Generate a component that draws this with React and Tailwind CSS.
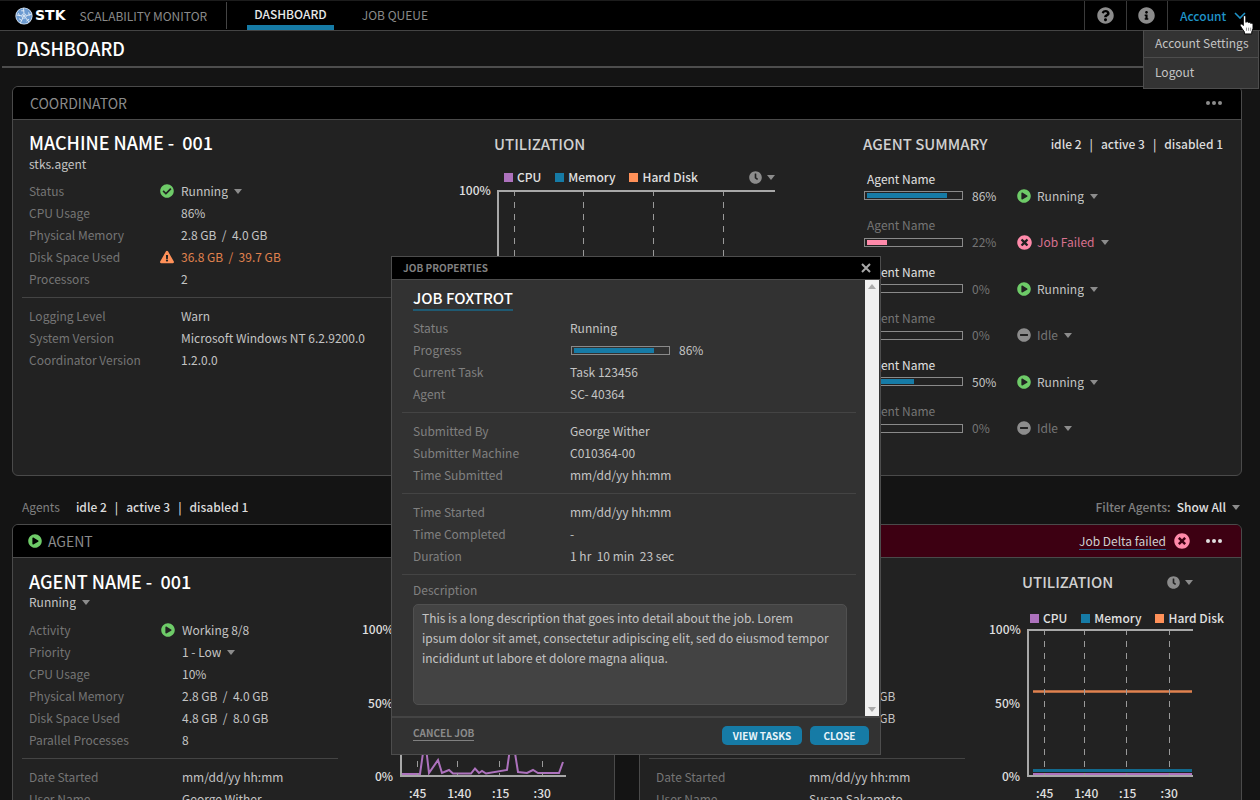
import { FaCheckCircle, FaPlayCircle, FaTimesCircle, FaMinusCircle, FaQuestionCircle, FaInfoCircle, FaClock, FaExclamationTriangle } from "react-icons/fa";

function Caret({ className = "" }) {
  return (
    <svg viewBox="0 0 8 5" className={"h-[5px] w-2 shrink-0 fill-[#8c8c8c] " + className} aria-hidden="true">
      <path d="M0 0h8L4 5z" />
    </svg>
  );
}

function Dots({ className }) {
  return (
    <button type="button" aria-label="More options" className={className}>
      <svg viewBox="0 0 16 4" className="h-1 w-4 fill-current" aria-hidden="true">
        <circle cx="2" cy="2" r="2" />
        <circle cx="8" cy="2" r="2" />
        <circle cx="14" cy="2" r="2" />
      </svg>
    </button>
  );
}

function Dropdown({ label, value, className = "" }) {
  return (
    <span className={"inline-flex items-center gap-[6px] " + className}>
      <select aria-label={label} defaultValue={value} className="field-sizing-content cursor-pointer appearance-none bg-transparent p-0 outline-none">
        <option>{value}</option>
      </select>
      <Caret className="mt-px" />
    </span>
  );
}

function ClockMenu() {
  return (
    <button type="button" aria-label="Time range" className="flex items-center gap-[5px] text-[#8c8c8c]">
      <FaClock className="size-[13px]" />
      <Caret />
    </button>
  );
}

function Logo() {
  return (
    <span className="flex items-center gap-[2px]">
      <svg viewBox="0 0 18 18" className="size-[18px]" aria-hidden="true">
        <circle cx="9" cy="9" r="8.6" fill="#dfe9f5" />
        <circle cx="9" cy="9" r="7.8" fill="#6c9bd1" />
        <g stroke="#e8f0f8" strokeWidth="0.9" fill="none">
          <path d="M8.5 1.2 9 6.6M16.6 7.4 11.4 8.6M14 15 10.6 10.8M5.4 16 7.8 11M1.4 8 6.6 8.8" />
          <circle cx="9" cy="9" r="2.2" fill="#6c9bd1" />
          <path d="M6.2 3.8h3M13.6 5.4l.8 3M11.4 14.2l2.6-2M4 11.6l2.8 2M3.4 6.2l1.2 3" />
        </g>
        <circle cx="9" cy="9" r="0.9" fill="#fff" />
      </svg>
      <span className="font-['DejaVu_Sans',sans-serif] text-[14px] font-bold text-white">STK</span>
    </span>
  );
}

function HandPointer() {
  return (
    <svg viewBox="0 0 14 19" className="pointer-events-none absolute right-[5px] top-[14px] z-30 h-[20px] w-[16px]" aria-hidden="true">
      <path
        d="M3.5 1.6C3.5.3 5.9.3 5.9 1.6V7l.5-.4c.6-.5 1.8-.2 2 .6.6-.5 1.8-.2 2 .7.9-.4 2.3 0 2.3 1.2v3.5c0 1.5-1 2.6-1.2 3.6V18H4.6v-1.6C4.4 15.2 2.6 13.7 1.9 12.3L.6 10.1C.3 8.9 1.5 8.2 2.4 8.9L3.5 10z"
        fill="#fff"
        stroke="#000"
        strokeWidth="0.9"
      />
      <path d="M6.5 12v3M8.5 12v3M10.5 12v3" stroke="#555" strokeWidth="0.6" />
    </svg>
  );
}

function TopBar() {
  return (
    <header className="relative flex h-[31px] items-stretch border-y border-t-[#1c1c1c] border-b-[#444] bg-black">
      <div className="my-px flex items-center gap-[14px] border-r border-[#444] pl-[15px] pr-[19px]">
        <Logo />
        <span className="text-[12px] text-[#8a8a8a]">SCALABILITY MONITOR</span>
      </div>
      <nav className="flex pl-5">
        <a href="#dashboard" className="border-b-[5px] border-[#167ba6] px-[7px] text-[12px] font-medium leading-[26px] text-[#e8e8e8]">DASHBOARD</a>
        <a href="#queue" className="px-7 text-[12px] leading-[28px] text-[#8a8a8a]">JOB QUEUE</a>
      </nav>
      <div className="ml-auto flex items-stretch text-[#8c8c8c]">
        <button type="button" aria-label="Help" className="flex w-[42px] items-center justify-center border-l border-[#3a3a3a] pr-px">
          <FaQuestionCircle className="size-[17px]" />
        </button>
        <button type="button" aria-label="Information" className="flex w-[41px] items-center justify-center border-l border-[#3a3a3a] pr-px">
          <FaInfoCircle className="size-[17px]" />
        </button>
        <button type="button" aria-expanded="true" className="flex w-[93px] items-center gap-2 border-l border-[#3a3a3a] pl-3 text-[12px] font-medium text-[#1f93c8]">
          Account
          <svg viewBox="0 0 12 7" className="h-[7px] w-3" aria-hidden="true">
            <path d="M1 1l5 5 5-5" fill="none" stroke="currentColor" strokeWidth="1.6" />
          </svg>
        </button>
      </div>
      <div className="absolute right-px top-[29px] z-20 w-[116px] divide-y divide-[#4d4d4d] border border-[#4d4d4d] bg-[#333] text-[12px]">
        <a href="#settings" className="block whitespace-nowrap pb-[2px] pl-[11px] leading-6 text-[#c4c4c4]">Account Settings</a>
        <a href="#logout" className="block pb-[2px] pl-[11px] leading-7 text-[#c4c4c4]">Logout</a>
      </div>
      <HandPointer />
    </header>
  );
}

function Counts() {
  return (
    <span className="flex gap-2 font-medium text-[#dcdcdc]">
      <span>idle 2</span>
      <span>|</span>
      <span>active 3</span>
      <span>|</span>
      <span>disabled 1</span>
    </span>
  );
}

function Row({ label, icon, columns = "grid-cols-[131px_21px_1fr]", children }) {
  return (
    <div className={"grid items-center pl-[7px] leading-[22px] " + columns}>
      <dt className="text-[#757575]">{label}</dt>
      <span>{icon}</span>
      <dd className="whitespace-pre text-[#c4c4c4]">{children}</dd>
    </div>
  );
}

function AgentRow(props) {
  return <Row columns="grid-cols-[132px_21px_1fr]" {...props} />;
}

function Rule() {
  return <hr className="my-[7px] border-[#444]" />;
}

const legend = [
  ["CPU", "bg-[#ad72bd]"],
  ["Memory", "bg-[#167ba6]"],
  ["Hard Disk", "bg-[#ff9159]"],
];

function Legend() {
  return (
    <ul className="flex gap-[14px] font-medium leading-4 text-[#e0e0e0]">
      {legend.map(([name, color]) => (
        <li key={name} className="flex items-center gap-1 whitespace-nowrap">
          <i className={"size-[9px] " + color} />
          {name}
        </li>
      ))}
    </ul>
  );
}

function Chart({ ticks, width, className, children }) {
  return (
    <div className="flex gap-[7px] font-medium text-[#e0e0e0]">
      <div className="-my-2 flex h-[163px] w-[31px] flex-col justify-between text-right leading-4">
        <span>100%</span>
        <span>50%</span>
        <span>0%</span>
      </div>
      <div>
        <svg viewBox={`0 0 ${width} 148`} className={"h-[148px] " + className} aria-hidden="true">
          {children}
          <g stroke="#9a9a9a" strokeWidth="1" strokeDasharray="6 6">
            {ticks.map((x) => (
              <path key={x} d={`M${x + 0.5} 0V146`} />
            ))}
          </g>
          <path d={`M${width} 1H1V147H${width}`} fill="none" stroke="#a8a8a8" strokeWidth="2" />
        </svg>
        <div className="-ml-[3px] mt-2 grid w-[166px] grid-cols-4 text-center leading-4">
          <span>:45</span>
          <span>1:40</span>
          <span>:15</span>
          <span>:30</span>
        </div>
      </div>
    </div>
  );
}

function Progress({ value, fill = "bg-[#167ba6]" }) {
  return (
    <div role="progressbar" aria-label="Progress" aria-valuenow={value} className="h-[9px] w-[99px] border border-[#8a8a8a] px-[2px] py-px">
      <div className={"h-full " + fill} style={{ width: `${value}%` }} />
    </div>
  );
}

const statusIcons = {
  Running: <FaPlayCircle className="size-[14px] text-[#6ecb68]" />,
  "Job Failed": <FaTimesCircle className="size-[15px] text-[#ff8aaa]" />,
  Idle: <FaMinusCircle className="size-[14px] text-[#8c8c8c]" />,
};

const agents = [
  { pct: 86, status: "Running", on: true, tone: "text-[#c4c4c4]" },
  { pct: 22, status: "Job Failed", tone: "text-[#d9718f]", fill: "bg-[#ff8aaa]" },
  { pct: 0, status: "Running", on: true, tone: "text-[#c4c4c4]" },
  { pct: 0, status: "Idle", tone: "text-[#757575]" },
  { pct: 50, status: "Running", on: true, tone: "text-[#c4c4c4]" },
  { pct: 0, status: "Idle", tone: "text-[#757575]" },
];

function AgentSummary() {
  return (
    <section className="pr-[18px] pt-3">
      <div className="flex items-center justify-between">
        <h3 className="text-[15px] font-medium leading-6 text-[#d0d0d0]">AGENT SUMMARY</h3>
        <Counts />
      </div>
      <ul className="mt-[2px] grid h-[279px] grid-rows-6">
        {agents.map((a, i) => (
          <li key={i} className="flex flex-col justify-end">
            <div className={"pl-1 leading-[17px] " + (a.on ? "text-[#e0e0e0]" : "text-[#757575]")}>Agent Name</div>
            <div className="flex items-center pl-px leading-[18px]">
              <Progress value={a.pct} fill={a.fill} />
              <span className={"w-[54px] pl-[9px] " + (a.on && a.pct ? "text-[#c4c4c4]" : "text-[#757575]")}>{a.pct}%</span>
              <span className="w-5">{statusIcons[a.status]}</span>
              <Dropdown label="Agent status" value={a.status} className={a.tone} />
            </div>
          </li>
        ))}
      </ul>
    </section>
  );
}

const panelHead = "flex h-[33px] items-center rounded-t-[5px] border-b border-[#4a4a4a] pl-[17px] pr-[19px]";
const panel = "rounded-[6px] border border-[#4a4a4a] bg-[#222]";

function Coordinator() {
  return (
    <section className={"h-[390px] " + panel}>
      <div className={"justify-between bg-black " + panelHead}>
        <h2 className="text-[14px] text-[#8a8a8a]">COORDINATOR</h2>
        <Dots className="text-[#8c8c8c]" />
      </div>
      <div className="grid grid-cols-[437fr_404fr_378fr] pl-[9px]">
        <div className="pr-6 pt-[10px]">
          <h3 className="mb-px whitespace-pre pl-[7px] text-[18px] font-medium leading-6 text-white">MACHINE NAME -  001</h3>
          <p className="mb-[7px] pl-[7px] leading-[18px] text-[#c4c4c4]">stks.agent</p>
          <dl>
            <Row label="Status" icon={<FaCheckCircle className="size-[14px] text-[#6ecb68]" />}>
              <Dropdown label="Status" value="Running" />
            </Row>
            <Row label="CPU Usage">86%</Row>
            <Row label="Physical Memory">2.8 GB  /  4.0 GB</Row>
            <Row label="Disk Space Used" icon={<FaExclamationTriangle className="size-[14px] text-[#ff9159]" />}>
              <span className="text-[#e0824f]">36.8 GB  /  39.7 GB</span>
            </Row>
            <Row label="Processors">2</Row>
          </dl>
          <Rule />
          <dl>
            <Row label="Logging Level">Warn</Row>
            <Row label="System Version">Microsoft Windows NT 6.2.9200.0</Row>
            <Row label="Coordinator Version">1.2.0.0</Row>
          </dl>
        </div>
        <section className="pt-3">
          <h3 className="pl-[35px] text-[15px] font-medium leading-6 text-[#d0d0d0]">UTILIZATION</h3>
          <div className="mb-[5px] mt-[13px] flex w-[316px] items-center justify-between pl-[45px]">
            <Legend />
            <ClockMenu />
          </div>
          <Chart ticks={[17, 86, 156, 226]} width={278} className="w-[278px]" />
        </section>
        <AgentSummary />
      </div>
    </section>
  );
}

const cpuLine = "M2 145H20L25 110 29 144 38 131 42 144 49 141 53 144.5H71L75 139.5 79 144 82 142 86 144.5 107 141 112 105 118 143 127 144 133 141 138 144H159L163 133";

function AgentCard({ failed, user }) {
  return (
    <section className={"h-[390px] " + panel}>
      <div className={(failed ? "bg-[#3d0012] " : "bg-black ") + panelHead}>
        <span className="-ml-[2px]">{failed ? statusIcons["Job Failed"] : statusIcons.Running}</span>
        <h2 className="pl-[6px] text-[14px] text-[#8a8a8a]">AGENT</h2>
        <div className="ml-auto flex items-center">
          {failed && <a href="#delta" className="mr-2 border-b border-[#28618a] leading-[17px] text-[#d0d0d0]">Job Delta failed</a>}
          {failed && <FaTimesCircle className="mr-4 size-4 text-[#ff8aaa]" />}
          <Dots className="text-[#e0e0e0]" />
        </div>
      </div>
      <div className="flex justify-between pl-[9px]">
        <div className="w-[316px] pt-[11px]">
          <h3 className="whitespace-pre pl-[7px] text-[18px] font-medium leading-6 text-white">AGENT NAME -  001</h3>
          <div className="mb-2 pl-[7px] leading-[18px] text-[#c4c4c4]">
            <Dropdown label="Agent state" value="Running" />
          </div>
          <dl>
            <AgentRow label="Activity" icon={<FaPlayCircle className="size-[14px] text-[#6ecb68]" />}>Working 8/8</AgentRow>
            <AgentRow label="Priority"><Dropdown label="Priority" value="1 - Low" /></AgentRow>
            <AgentRow label="CPU Usage">10%</AgentRow>
            <AgentRow label="Physical Memory">2.8 GB  /  4.0 GB</AgentRow>
            <AgentRow label="Disk Space Used">4.8 GB  /  8.0 GB</AgentRow>
            <AgentRow label="Parallel Processes">8</AgentRow>
          </dl>
          <Rule />
          <dl>
            <AgentRow label="Date Started">mm/dd/yy hh:mm</AgentRow>
            <AgentRow label="User Name">{user}</AgentRow>
          </dl>
        </div>
        <section className="w-[252px] pt-3">
          <div className="flex w-[204px] items-center justify-between pl-[33px]">
            <h3 className="text-[15px] font-medium leading-6 text-[#d0d0d0]">UTILIZATION</h3>
            <ClockMenu />
          </div>
          <div className="mb-[3px] mt-4 pl-[41px]">
            <Legend />
          </div>
          <Chart ticks={[17, 57, 99, 142]} width={166} className="w-[166px]">
            {failed ? (
              <g fill="none" strokeWidth="3">
                <path d="M6 62.5H165" stroke="#e0824f" strokeWidth="2.5" />
                <path d="M6 141.5H165" stroke="#136a8e" />
                <path d="M6 145.5H165" stroke="#ad72bd" />
              </g>
            ) : (
              <path d={cpuLine} fill="none" stroke="#ad72bd" strokeWidth="2" />
            )}
          </Chart>
        </section>
      </div>
    </section>
  );
}

function Field({ label, children }) {
  return (
    <div className="grid grid-cols-[157px_1fr] items-center pl-[11px] leading-[22px]">
      <dt className="text-[#808080]">{label}</dt>
      <dd className="whitespace-pre text-[#c4c4c4]">{children}</dd>
    </div>
  );
}

function JobDialog() {
  return (
    <div role="dialog" aria-labelledby="dialog-title" className="absolute left-[391px] top-64 z-10 w-[490px] border border-[#4d4d4d] bg-[#323232]">
      <div className="flex h-[23px] items-center justify-between border-b border-[#4d4d4d] bg-black pl-[11px] pr-[9px]">
        <h2 id="dialog-title" className="text-[10px] font-bold leading-[22px] text-[#808080]">JOB PROPERTIES</h2>
        <button type="button" aria-label="Close dialog">
          <svg viewBox="0 0 10 10" className="size-[10px]" aria-hidden="true">
            <path d="M1 1l8 8M9 1L1 9" stroke="#a8a8a8" strokeWidth="2" />
          </svg>
        </button>
      </div>
      <div className="flex pr-px">
        <div className="flex-1 pb-[11px] pl-[10px] pr-[9px] pt-2">
          <h3 className="mb-[6px] ml-[11px] w-fit border-b-2 border-[#1f5a72] pb-px text-[15px] font-medium leading-5 text-white">JOB FOXTROT</h3>
          <dl>
            <Field label="Status">Running</Field>
            <Field label="Progress">
              <span className="flex items-center gap-[9px] pl-px">
                <Progress value={86} />
                86%
              </span>
            </Field>
            <Field label="Current Task">Task 123456</Field>
            <Field label="Agent">SC- 40364</Field>
          </dl>
          <Rule />
          <dl>
            <Field label="Submitted By">George Wither</Field>
            <Field label="Submitter Machine">C010364-00</Field>
            <Field label="Time Submitted">mm/dd/yy hh:mm</Field>
          </dl>
          <Rule />
          <dl>
            <Field label="Time Started">mm/dd/yy hh:mm</Field>
            <Field label="Time Completed">-</Field>
            <Field label="Duration">1 hr  10 min  23 sec</Field>
          </dl>
          <hr className="mb-1 mt-[7px] border-[#444]" />
          <div className="pl-[11px] pr-[9px]">
            <label htmlFor="description" className="block leading-[22px] text-[#808080]">Description</label>
            <textarea
              id="description"
              className="mt-[3px] block h-[101px] w-full resize-none rounded-[5px] border border-[#505050] bg-[#434343] py-[3px] pl-2 pr-4 leading-5 text-[#c4c4c4] outline-none"
              defaultValue="This is a long description that goes into detail about the job. Lorem ipsum dolor sit amet, consectetur adipiscing elit, sed do eiusmod tempor incididunt ut labore et dolore magna aliqua."
            />
          </div>
        </div>
        <div className="flex w-[14px] flex-col items-center justify-between bg-[#f0f0f0] py-1">
          <Caret className="rotate-180 opacity-70" />
          <Caret className="opacity-70" />
        </div>
      </div>
      <div className="flex h-[38px] items-start gap-2 border-t-2 border-[#444] pl-[21px] pr-[11px] pt-2 text-[10px] font-bold">
        <button type="button" className="mr-auto border-b border-[#808080] leading-[14px] text-[#8a8a8a]">CANCEL JOB</button>
        <button type="button" className="h-[19px] w-20 rounded-[5px] bg-[#167ba6] leading-[18px] text-[#e8f4fa]">VIEW TASKS</button>
        <button type="button" className="h-[19px] w-[59px] rounded-[5px] bg-[#167ba6] leading-[18px] text-[#e8f4fa]">CLOSE</button>
      </div>
    </div>
  );
}

export default function App() {
  return (
    <div className="relative h-screen overflow-hidden bg-[#141414] font-['Noto_Sans_CJK_SC',sans-serif] text-[12px]">
      <TopBar />
      <div className="ml-[2px] mr-px border-b-2 border-[#4d4d4d] pb-px pl-[14px]">
        <h1 className="text-[18px] font-medium leading-[34px] text-white">DASHBOARD</h1>
      </div>
      <main className="pl-3 pr-[18px] pt-[18px]">
        <Coordinator />
        <div className="flex h-12 items-center justify-between pl-[10px] pr-[2px] pt-[14px]">
          <div className="flex gap-4">
            <span className="text-[#808080]">Agents</span>
            <Counts />
          </div>
          <div className="flex gap-[6px] font-medium">
            <span className="text-[#808080]">Filter Agents:</span>
            <Dropdown label="Filter agents" value="Show All" className="text-[#e0e0e0]" />
          </div>
        </div>
        <div className="grid grid-cols-2 gap-6">
          <AgentCard user="George Wither" />
          <AgentCard failed user="Susan Sakamoto" />
        </div>
      </main>
      <JobDialog />
    </div>
  );
}
